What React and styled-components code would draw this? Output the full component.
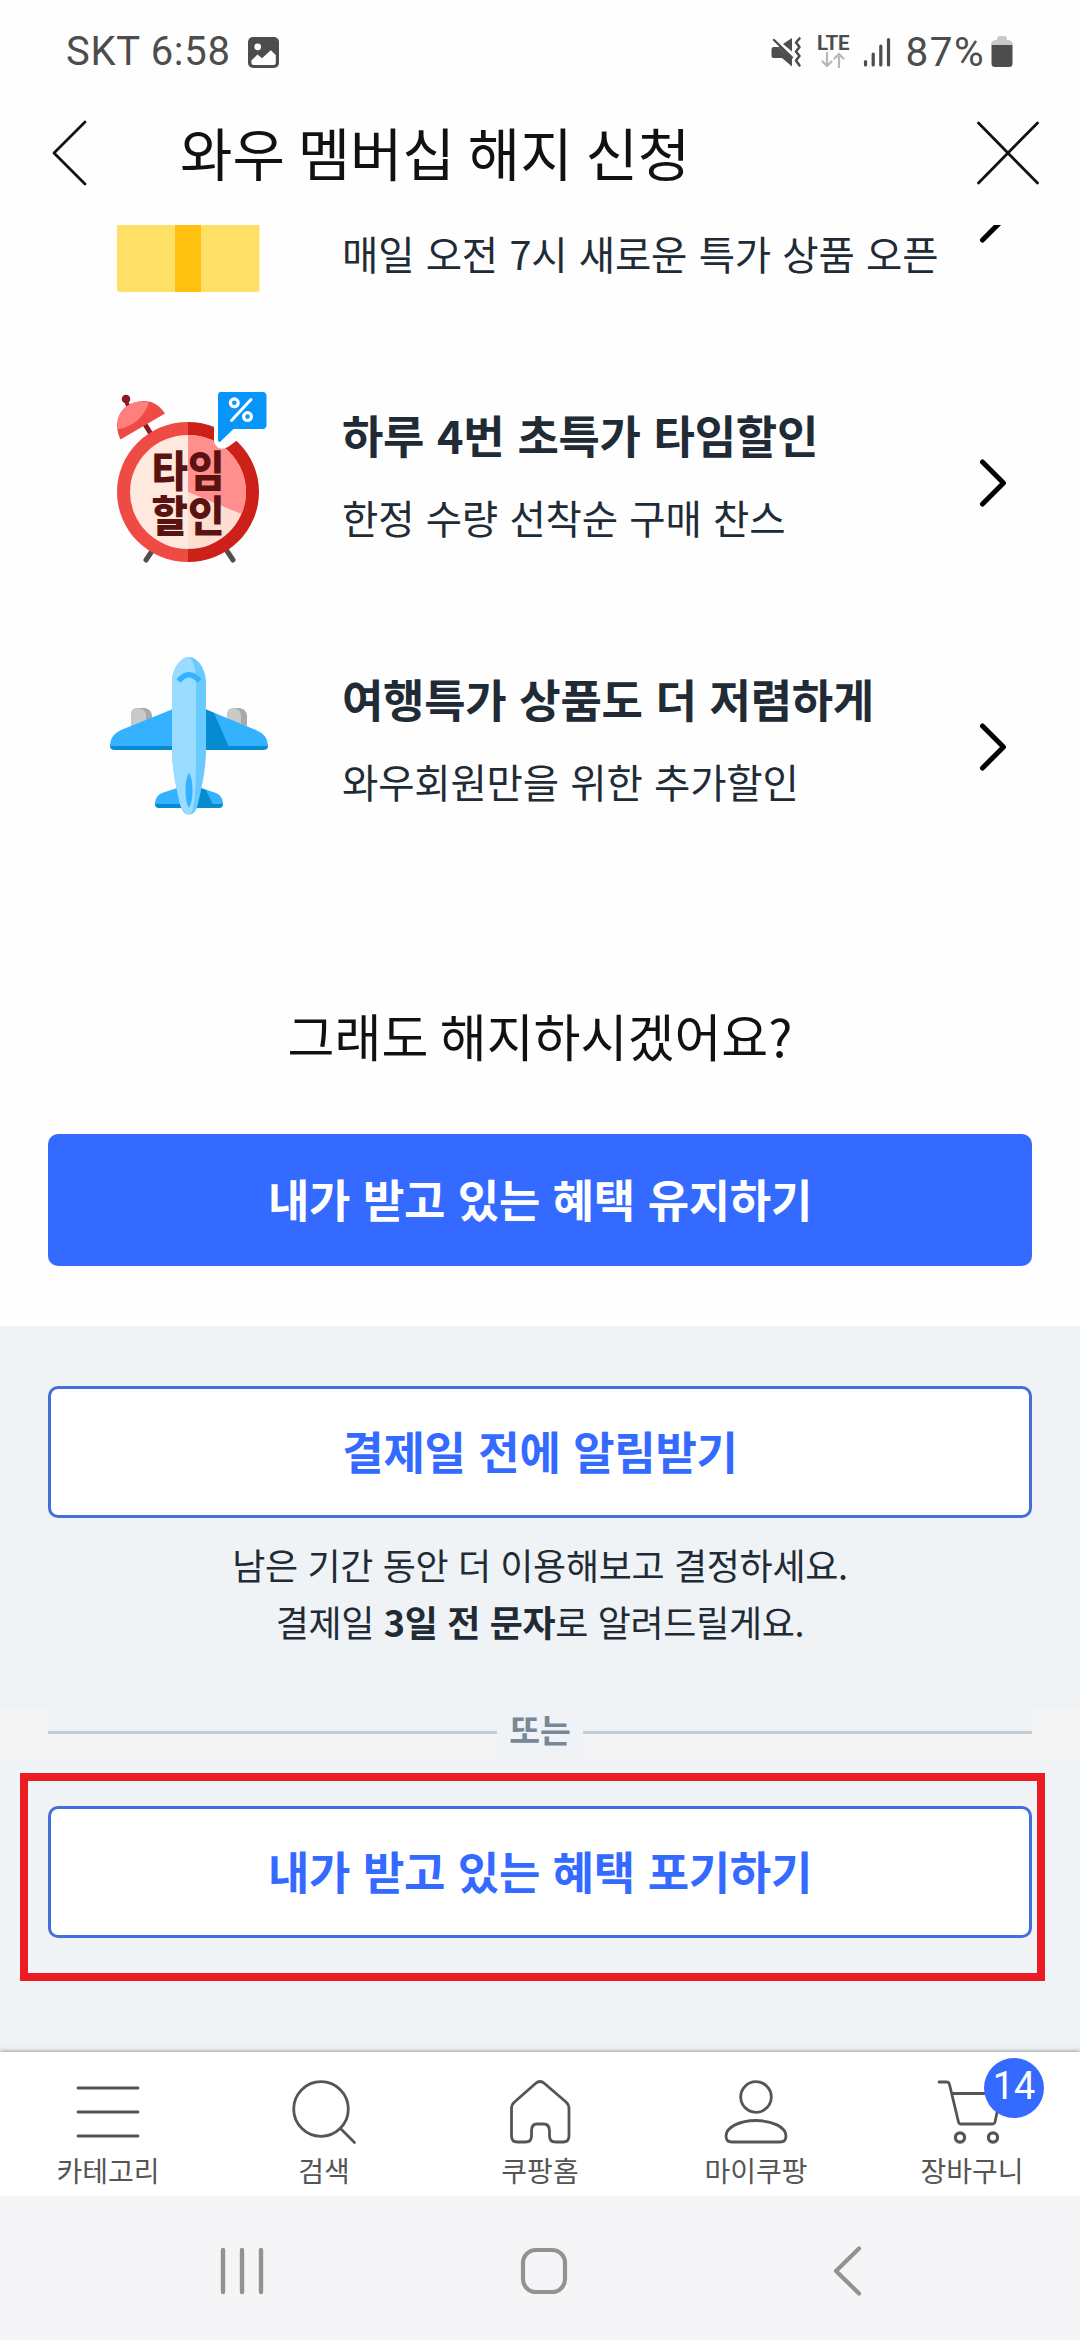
import React from 'react';
import styled, { createGlobalStyle } from 'styled-components';

const GlobalStyle = createGlobalStyle`
  * { box-sizing: border-box; }
  html, body { margin: 0; padding: 0; background: #fefefe; }
  body { font-family: "Noto Sans CJK KR", "Noto Sans", sans-serif; color: #111; }
  button { font: inherit; background: none; border: 0; padding: 0; }
  h1, h2, p { margin: 0; font-weight: 400; }
  svg { display: block; flex: none; }
`;

const Screen = styled.div`
  width: 1080px;
  height: 2340px;
  display: flex;
  flex-direction: column;
  overflow: hidden;
  background: #fefefe;
`;

const StatusBar = styled.header`
  height: 104px;
  flex: none;
  display: flex;
  justify-content: space-between;
  padding: 0 67px 0 66px;
  font-family: Roboto, "Noto Sans", sans-serif;
  font-size: 40px;
  line-height: 104px;
  color: #4d4d4d;
`;

const StatusGroup = styled.div`
  display: flex;
  align-items: center;
`;

const Carrier = styled.span`
  margin-right: 17px;
  white-space: pre;
  letter-spacing: 0.7px;
`;

const Network = styled.div`
  width: 33px;
  height: 34px;
  margin: 0 13px 0 15px;
  display: flex;
  flex-direction: column;
  align-items: center;
  font-size: 20.5px;
  font-weight: 700;
  line-height: 17px;
  letter-spacing: -0.3px;
`;

const Percent = styled.span`
  margin: 0 6px 0 15px;
  font-size: 40.5px;
  letter-spacing: 1.4px;
`;

const TitleBar = styled.div`
  height: 121px;
  flex: none;
  display: flex;
  align-items: center;
  padding: 0 40px 23px 51px;
`;

const PageTitle = styled.h1`
  flex: 1;
  margin-left: 91px;
  padding-bottom: 4px;
  font-size: 57px;
  line-height: 80px;
  color: #111;
`;

const Content = styled.main`
  flex: 1;
  min-height: 0;
  overflow: hidden;
`;

const BenefitList = styled.div`
  margin-top: -138px;
  display: flex;
  flex-direction: column;
`;

const BenefitRow = styled.div`
  height: 264px;
  display: flex;
  align-items: center;
  padding: 0 73px 0 90px;
`;

const BenefitText = styled.div`
  flex: 1;
  margin-left: 52px;
  padding-bottom: 14px;
  color: #212b36;
  line-height: 82px;
  white-space: nowrap;
`;

const BenefitTitle = styled.h2`
  font-size: 45px;
  font-weight: 700;
  line-height: 82px;
  letter-spacing: -0.3px;
  word-spacing: 3px;
`;

const BenefitDesc = styled.p`
  font-size: 39.5px;
  letter-spacing: -0.2px;
  word-spacing: 2.8px;
`;

const KeepSection = styled.section`
  padding: 116px 48px 60px;
  display: flex;
  flex-direction: column;
  height: 447px;
`;

const Question = styled.p`
  height: 80px;
  margin-bottom: 59px;
  text-align: center;
  font-size: 51px;
  line-height: 80px;
`;

const ActionButton = styled.button`
  width: 100%;
  height: 132px;
  flex: none;
  display: flex;
  align-items: center;
  justify-content: center;
  padding-bottom: 4px;
  border-radius: 10px;
  border: ${(p) => (p.$filled ? '0' : '3px solid #426fdc')};
  background: ${(p) => (p.$filled ? '#346aff' : '#fff')};
  color: ${(p) => (p.$filled ? '#fff' : '#346aff')};
  font-size: 45px;
  font-weight: 700;
  letter-spacing: -0.3px;
  word-spacing: 2.8px;
`;

const LeaveSection = styled.section`
  height: 726px;
  background: #eff3f6;
  padding-top: 60px;
  display: flex;
  flex-direction: column;
`;

const Inset = styled.div`
  padding: 0 48px;
`;

const Notice = styled.p`
  margin-top: 18px;
  height: 171px;
  text-align: center;
  font-size: 36px;
  line-height: 57px;
  letter-spacing: -0.3px;
  word-spacing: 1.8px;
  color: #212b36;
`;

const OrStrip = styled.div`
  height: 51px;
  padding: 0 48px;
  background: #f4f4f4;
  display: flex;
  align-items: flex-start;
`;

const OrLine = styled.div`
  flex: 1;
  height: 27px;
  background: #eff3f6;
  border-bottom: 3px solid #c1ccd4;
`;

const OrLabel = styled.span`
  width: 86px;
  height: 48px;
  background: #eff3f8;
  text-align: center;
  font-size: 33.5px;
  font-weight: 700;
  line-height: 43px;
  color: #788896;
`;

const Highlight = styled.div`
  margin: 15px 35px 0 20px;
  height: 208px;
  border: 8px solid #ec1c24;
  padding: 25px 5px 0 20px;
`;

const TabBar = styled.nav`
  position: relative;
  height: 144px;
  flex: none;
  display: grid;
  grid-template-columns: repeat(5, 216px);
  background: #fff;
  box-shadow: 0 -1px 4px rgba(0, 0, 0, 0.35);
`;

const Tab = styled.button`
  display: flex;
  flex-direction: column;
  align-items: center;
  padding-top: 22px;
  font-size: 28px;
  line-height: 40px;
  color: #555;
`;

const TabIcon = styled.span`
  position: relative;
  width: 76px;
  height: 76px;
`;

const Badge = styled.span`
  position: absolute;
  left: 50px;
  top: -16px;
  width: 60px;
  height: 60px;
  border-radius: 50%;
  background: #346aff;
  color: #fff;
  font-family: Roboto, sans-serif;
  font-size: 38px;
  line-height: 57px;
  text-align: center;
`;

const SystemBar = styled.footer`
  position: relative;
  height: 144px;
  flex: none;
  display: flex;
  align-items: center;
  background: #f5f5f8;
  padding: 6px 0 0 214px;
`;

const HomeKey = styled.span`
  margin: 0 260px 0 249px;
`;

const PictureIcon = () => (
  <svg width="31" height="31" viewBox="0 0 31 31">
    <rect width="31" height="31" rx="5" fill="#4d4d4d" />
    <circle cx="9.7" cy="9.8" r="3.4" fill="#fefefe" />
    <path d="M3.4 23.5L9.5 17.5L14 21.2L22.8 13.2L27.8 18V25.5Q27.8 28 25.3 28H5.9Q3.4 28 3.4 25.5Z" fill="#fefefe" />
  </svg>
);

const MuteIcon = () => (
  <svg width="31" height="32" viewBox="0 0 31 32">
    <path d="M2.5 11H7L21 25V30.5L11 22H2.5Q0.5 22 0.5 20V14.5Q0.5 11 2.5 11Z" fill="#4d4d4d" />
    <path d="M7 11L9 10.5L21 22V26Z" fill="#4d4d4d" />
    <path d="M21 2V15.5L12 8Z" fill="#4d4d4d" />
    <path d="M3 4L21 21.5" stroke="#4d4d4d" strokeWidth="2.4" strokeLinecap="round" />
    <path d="M28.5 2.5L25 6.5L28.5 11L25 15.5L28.5 20L25 24.5L28.5 29.5" fill="none" stroke="#4d4d4d" strokeWidth="2.6" strokeLinejoin="round" strokeLinecap="round" />
  </svg>
);

const DataArrows = () => (
  <svg width="24" height="16" viewBox="0 0 24 16">
    <path d="M6 1V14M1.5 9.5L6 14L10.5 9.5M18 15V2M13.5 6.5L18 2L22.5 6.5" fill="none" stroke="#b8b8b8" strokeWidth="2.2" strokeLinecap="round" />
  </svg>
);

const SignalIcon = () => (
  <svg width="28" height="32" viewBox="0 0 28 32">
    <path d="M2.5 25.5V29M10.2 18V29M17.8 10V29M25.5 3.5V29" stroke="#4d4d4d" strokeWidth="3.2" strokeLinecap="round" />
  </svg>
);

const BatteryIcon = () => (
  <svg width="22" height="32" viewBox="0 0 22 32">
    <path d="M6 3Q6 0 9 0H13Q16 0 16 3V4H18Q22 5 22 9H0Q0 5 4 4H6Z" fill="#c9c9c9" />
    <path d="M0.5 9H21.5V27.5Q21.5 31 18 31H4Q0.5 31 0.5 27.5Z" fill="#4d4d4d" />
  </svg>
);

const BackIcon = () => (
  <svg width="38" height="68" viewBox="0 0 38 68">
    <path d="M34 3L3 34L34 65" fill="none" stroke="#111" strokeWidth="2.8" strokeLinecap="round" strokeLinejoin="round" />
  </svg>
);

const CloseIcon = () => (
  <svg width="64" height="68" viewBox="0 0 64 68">
    <path d="M2.5 4L61.5 64M61.5 4L2.5 64" fill="none" stroke="#111" strokeWidth="2.8" strokeLinecap="round" />
  </svg>
);

const Chevron = () => (
  <svg width="28" height="50" viewBox="0 0 28 50">
    <path d="M3.5 4L24.5 25L3.5 46" fill="none" stroke="#000" strokeWidth="5" strokeLinecap="round" strokeLinejoin="round" />
  </svg>
);

const GiftArt = () => (
  <svg width="200" height="210" viewBox="0 0 200 210">
    <rect x="27" y="60" width="142.5" height="118" rx="3" fill="#ffe066" />
    <rect x="85" y="60" width="26" height="118" fill="#ffc010" />
  </svg>
);

const ClockArt = () => (
  <svg width="200" height="210" viewBox="0 8 200 210">
    <path d="M56 190L64 178M143 190L135 178" stroke="#4f4f4f" strokeWidth="5" strokeLinecap="round" />
    <path d="M66 72L51 48" stroke="#8b1a1e" strokeWidth="5" />
    <path d="M38 36L35 28" stroke="#8b1a1e" strokeWidth="4" />
    <circle cx="36" cy="29" r="4.3" fill="#8b1a1e" />
    <path d="M30.5 69.5C23 53 29 38 43 33C56 28 68 32 75 43.5Z" fill="#ef4b45" />
    <path d="M28 59C26 46 33 36.5 43 33C49 31 54 31 59 32.5C54 47 43 57 28 59Z" fill="#ff7f7c" />
    <path d="M98 52A71 70 0 0 0 98 192Z" fill="#ef4b45" />
    <path d="M98 52A71 70 0 0 1 98 192Z" fill="#cd2018" />
    <path d="M98 65A58 57 0 0 0 98 179Z" fill="#ffe9df" />
    <path d="M98 65A58 57 0 0 1 98 179Z" fill="#ffded2" />
    <path d="M98 65A58 57 0 0 1 151.5 144L98 122Z" fill="#ff8f8d" />
    <path d="M124 24V72Q128 82 138 77L153 66V24Z" fill="#fefefe" />
    <path d="M130.500 22H172.500Q176.500 22 176.500 26V55Q176.500 59 172.500 59H143.500L130.500 71.500Q128.300 73 128 70V26Q128 22 130.500 22Z" fill="#0795fa" />
    <g fill="none" stroke="#fff" strokeWidth="3.2">
      <circle cx="144.3" cy="32.8" r="3.9" />
      <circle cx="157.5" cy="46.6" r="3.9" />
      <path d="M161 29.5L141.5 50.5" strokeWidth="3" strokeLinecap="round" />
    </g>
    <text fill="#5b1311" fontFamily="Noto Sans CJK KR, sans-serif" fontSize="43" fontWeight="900">
      <tspan x="61.5" y="117" textLength="73" lengthAdjust="spacingAndGlyphs">타임</tspan>
      <tspan x="61.5" y="162" textLength="73" lengthAdjust="spacingAndGlyphs">할인</tspan>
    </text>
  </svg>
);

const PlaneArt = () => (
  <svg width="200" height="210" viewBox="0 2 200 210">
    <path d="M41 84V74Q41 68 48 68H55Q62 70 62 76V84Z" fill="#a9a9a9" />
    <path d="M41 86V74Q41 68 48 68Q56 69 56 76V84Z" fill="#c9c9c9" />
    <path d="M137 80V74Q138 68 144 68H150Q157 70 157 76V86Z" fill="#a9a9a9" />
    <path d="M137 80V74Q138 68 144 68Q151 70 151 76V86Z" fill="#c9c9c9" />
    <path d="M20 104H178V106Q178 110 173 110H25Q20 110 20 106Z" fill="#078bd0" />
    <path d="M83 69L31 90Q20 95 20 106H178Q178 95 166 90L115 69Z" fill="#35b2ff" />
    <path d="M115 69L124 73L139 107H115Z" fill="#078bd0" />
    <path d="M65 162H133V164Q133 168 129 168H69Q65 168 65 164Z" fill="#078bd0" />
    <path d="M87 148L72 153Q65 156 65 164H133Q133 156 126 153L111 148Z" fill="#35b2ff" />
    <path d="M111 148L116 150L123 165H104Z" fill="#078bd0" />
    <path d="M99 17C108 17 116 30 116 42V110C116 132 110 154 108 164C106 172 103 174.5 99 174.5C95 174.5 92 172 90 164C88 154 82 132 82 110V42C82 30 90 17 99 17Z" fill="#69caff" />
    <path d="M99 17C104 21 106 30 106 42V110C106 132 106 160 102 172Q100 174.5 98 174.5Q92 172 90 164C88 154 82 132 82 110V42C82 30 90 17 99 17Z" fill="#99dcff" />
    <path d="M88.5 41Q99 28.5 109.5 41" fill="none" stroke="#35b2ff" strokeWidth="5.5" />
    <path d="M99 133Q102.5 138 102.5 150T99 168Q95.5 162 95.5 150T99 133Z" fill="#35b2ff" />
  </svg>
);

const line = { fill: 'none', stroke: '#555', strokeWidth: 2.8, strokeLinecap: 'round', strokeLinejoin: 'round' };

const MenuIcon = () => (
  <svg width="76" height="76" viewBox="0 0 76 76">
    <path {...line} d="M8 14H68M8 38H68M8 62H68" />
  </svg>
);

const SearchIcon = () => (
  <svg width="76" height="76" viewBox="0 0 76 76">
    <circle {...line} cx="35" cy="35" r="27.3" />
    <path {...line} d="M54.5 54.5L68.5 68.5" />
  </svg>
);

const HomeIcon = () => (
  <svg width="76" height="76" viewBox="0 0 76 76">
    <path {...line} d="M33.500 9.500Q38 5.500 42.500 9.500L64 28Q67 30.500 67 35V62Q67 68 61 68H53.500Q47.500 68 47.500 62V57Q47.500 50 41.500 50H35Q29.500 50 29.500 57V62Q29.500 68 23.500 68H15.500Q9.500 68 9.500 62V35Q9.500 30.500 12.500 28Z" />
  </svg>
);

const UserIcon = () => (
  <svg width="76" height="76" viewBox="0 0 76 76">
    <circle {...line} cx="38" cy="23" r="15.3" />
    <path {...line} d="M14 68Q8 68 8 62C8 53 22 46.5 38 46.5S68 53 68 62Q68 68 62 68Z" />
  </svg>
);

const CartIcon = () => (
  <svg width="76" height="76" viewBox="0 0 76 76">
    <path {...line} d="M5 8H12.5Q15 8 15.5 10.5L24.5 48Q25 50 27 50H58.5Q60.5 50 61 48L67 19.5H18" />
    <circle {...line} strokeWidth="3.2" cx="26" cy="63.5" r="4.6" />
    <circle {...line} strokeWidth="3.2" cx="59" cy="63.5" r="4.6" />
  </svg>
);

const RecentsIcon = () => (
  <svg width="56" height="50" viewBox="0 0 56 50">
    <path d="M9 4V46M28 4V46M47 4V46" stroke="#929292" strokeWidth="4.4" strokeLinecap="round" />
  </svg>
);

const HomeKeyIcon = () => (
  <svg width="50" height="50" viewBox="0 0 50 50">
    <rect x="4" y="4" width="42" height="42" rx="13" fill="none" stroke="#929292" strokeWidth="4.2" />
  </svg>
);

const BackKeyIcon = () => (
  <svg width="40" height="50" viewBox="0 0 40 50">
    <path d="M30 2.5L7 25L30 47.5" fill="none" stroke="#929292" strokeWidth="4.2" strokeLinecap="round" strokeLinejoin="round" />
  </svg>
);

const benefits = [
  { Art: GiftArt, title: '', desc: '매일 오전 7시 새로운 특가 상품 오픈' },
  { Art: ClockArt, title: '하루 4번 초특가 타임할인', desc: '한정 수량 선착순 구매 찬스' },
  { Art: PlaneArt, title: '여행특가 상품도 더 저렴하게', desc: '와우회원만을 위한 추가할인' },
];

const tabs = [
  { Icon: MenuIcon, label: '카테고리' },
  { Icon: SearchIcon, label: '검색' },
  { Icon: HomeIcon, label: '쿠팡홈' },
  { Icon: UserIcon, label: '마이쿠팡' },
  { Icon: CartIcon, label: '장바구니', badge: '14' },
];

export default function App() {
  return (
    <Screen>
      <GlobalStyle />
      <StatusBar>
        <StatusGroup>
          <Carrier>SKT 6:58</Carrier>
          <PictureIcon />
        </StatusGroup>
        <StatusGroup>
          <MuteIcon />
          <Network>
            LTE
            <DataArrows />
          </Network>
          <SignalIcon />
          <Percent>87%</Percent>
          <BatteryIcon />
        </StatusGroup>
      </StatusBar>
      <TitleBar>
        <BackIcon />
        <PageTitle>와우 멤버십 해지 신청</PageTitle>
        <CloseIcon />
      </TitleBar>
      <Content>
        <BenefitList>
          {benefits.map(({ Art, title, desc }) => (
            <BenefitRow key={desc}>
              <Art />
              <BenefitText>
                <BenefitTitle>{title || '\u00a0'}</BenefitTitle>
                <BenefitDesc>{desc}</BenefitDesc>
              </BenefitText>
              <Chevron />
            </BenefitRow>
          ))}
        </BenefitList>
        <KeepSection>
          <Question>그래도 해지하시겠어요?</Question>
          <ActionButton $filled>내가 받고 있는 혜택 유지하기</ActionButton>
        </KeepSection>
        <LeaveSection>
          <Inset>
            <ActionButton>결제일 전에 알림받기</ActionButton>
          </Inset>
          <Notice>
            남은 기간 동안 더 이용해보고 결정하세요.
            <br />
            결제일 <b>3일 전 문자</b>로 알려드릴게요.
          </Notice>
          <OrStrip>
            <OrLine />
            <OrLabel>또는</OrLabel>
            <OrLine />
          </OrStrip>
          <Highlight>
            <ActionButton>내가 받고 있는 혜택 포기하기</ActionButton>
          </Highlight>
        </LeaveSection>
      </Content>
      <TabBar>
        {tabs.map(({ Icon, label, badge }) => (
          <Tab key={label}>
            <TabIcon>
              <Icon />
              {badge && <Badge>{badge}</Badge>}
            </TabIcon>
            {label}
          </Tab>
        ))}
      </TabBar>
      <SystemBar>
        <RecentsIcon />
        <HomeKey>
          <HomeKeyIcon />
        </HomeKey>
        <BackKeyIcon />
      </SystemBar>
    </Screen>
  );
}
